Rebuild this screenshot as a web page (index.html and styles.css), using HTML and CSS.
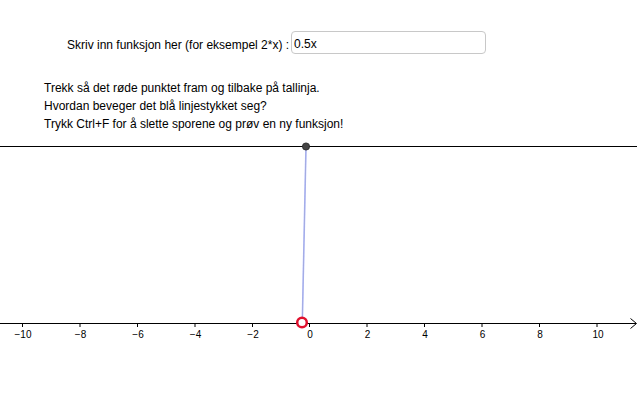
FILE: index.html
```html
<!DOCTYPE html>
<html lang="no">
<head>
<meta charset="utf-8">
<title>Tallinje</title>
<link rel="stylesheet" href="styles.css">
</head>
<body>
<div class="applet">
  <svg class="canvas" width="639" height="411" viewBox="0 0 639 411" xmlns="http://www.w3.org/2000/svg">
    <line x1="0" y1="146.5" x2="637" y2="146.5" stroke="#000" stroke-width="1.2"/>
    <line x1="0" y1="323.5" x2="636" y2="323.5" stroke="#000" stroke-width="1"/>
    <polyline points="630.5,318.5 636.5,323.5 630.5,328.5" fill="none" stroke="#000" stroke-width="1"/>
    <g stroke="#000" stroke-width="1">
      <line x1="22.5" y1="323.5" x2="22.5" y2="327"/>
      <line x1="80" y1="323.5" x2="80" y2="327"/>
      <line x1="137.5" y1="323.5" x2="137.5" y2="327"/>
      <line x1="195" y1="323.5" x2="195" y2="327"/>
      <line x1="252.5" y1="323.5" x2="252.5" y2="327"/>
      <line x1="309.5" y1="323.5" x2="309.5" y2="327"/>
      <line x1="367" y1="323.5" x2="367" y2="327"/>
      <line x1="424.5" y1="323.5" x2="424.5" y2="327"/>
      <line x1="482" y1="323.5" x2="482" y2="327"/>
      <line x1="539.5" y1="323.5" x2="539.5" y2="327"/>
      <line x1="597" y1="323.5" x2="597" y2="327"/>
    </g>
    <g class="ticklabels" text-anchor="middle">
      <text x="23" y="338">−10</text>
      <text x="80.5" y="338">−8</text>
      <text x="138" y="338">−6</text>
      <text x="195.5" y="338">−4</text>
      <text x="253" y="338">−2</text>
      <text x="310" y="338">0</text>
      <text x="367.5" y="338">2</text>
      <text x="425" y="338">4</text>
      <text x="482.5" y="338">6</text>
      <text x="540" y="338">8</text>
      <text x="598" y="338">10</text>
    </g>
    <line x1="306" y1="146.5" x2="302.3" y2="322.5" stroke="#aab6ff" stroke-width="1.6"/>
    <line x1="306" y1="146.5" x2="302.3" y2="322.5" stroke="#9a9ab0" stroke-width="0.4"/>
    <circle cx="306" cy="146.5" r="3.6" fill="#444" stroke="#222" stroke-width="0.8"/>
    <circle cx="302" cy="322.5" r="4.8" fill="#fff" stroke="#e0102e" stroke-width="2.5"/>
  </svg>
  <div class="input-row">
    <span class="input-label">Skriv inn funksjon her (for eksempel 2*x) :</span>
    <div class="input-box">0.5x</div>
  </div>
  <div class="instructions">
    <p>Trekk så det røde punktet fram og tilbake på tallinja.</p>
    <p>Hvordan beveger det blå linjestykket seg?</p>
    <p>Trykk Ctrl+F for å slette sporene og prøv en ny funksjon!</p>
  </div>
</div>
</body>
</html>
```
FILE: styles.css
```css
html, body {
  margin: 0;
  padding: 0;
  background: #fff;
}
.applet {
  position: relative;
  width: 639px;
  height: 411px;
  overflow: hidden;
  background: #fff;
  font-family: "Liberation Sans", Arial, sans-serif;
  font-size: 12px;
  color: #000;
}
.canvas {
  position: absolute;
  left: 0;
  top: 0;
}
.ticklabels {
  font-family: "Liberation Sans", Arial, sans-serif;
  font-size: 10px;
  fill: #000;
}
.input-row {
  position: relative;
  display: flex;
  align-items: center;
  padding: 31px 0 0 67px;
  height: 23px;
}
.input-label {
  margin-right: 2px;
  padding-top: 4px;
}
.input-box {
  box-sizing: border-box;
  width: 195px;
  height: 23px;
  border: 1px solid #c8c8c8;
  border-radius: 4px;
  padding: 4px 0 0 2px;
  line-height: 16px;
  font-size: 12px;
}
.instructions {
  position: relative;
  padding: 25px 0 0 44px;
}
.instructions p {
  margin: 0;
  line-height: 18px;
}
```
